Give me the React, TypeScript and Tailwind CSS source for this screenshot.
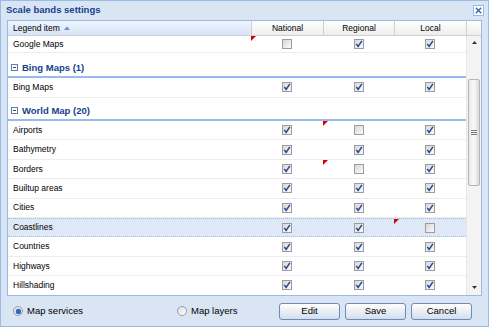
type Row = {
  name: string;
  v: [boolean, boolean, boolean];
  dirty?: number;
  selected?: boolean;
};

const WORLD: Row[] = [
  { name: "Airports", v: [true, false, true], dirty: 1 },
  { name: "Bathymetry", v: [true, true, true] },
  { name: "Borders", v: [true, false, true], dirty: 1 },
  { name: "Builtup areas", v: [true, true, true] },
  { name: "Cities", v: [true, true, true] },
  { name: "Coastlines", v: [true, true, false], dirty: 2, selected: true },
  { name: "Countries", v: [true, true, true] },
  { name: "Highways", v: [true, true, true] },
  { name: "Hillshading", v: [true, true, true] },
];

const COL_W = ["w-[72px]", "w-[71px]", "w-[72px]"];

function Checkbox({ on }: { on: boolean }) {
  return (
    <span className="flex h-[10px] w-[10px] items-center justify-center border border-[#9c9c9c] bg-linear-to-br from-[#d8d8d8] to-[#fbfbfb]">
      {on && (
        <svg width="8" height="8" viewBox="0 0 8 8">
          <path d="M1.3 3.9 L3.1 6.4 L6.9 0.9" fill="none" stroke="#2a4597" strokeWidth="1.5" />
        </svg>
      )}
    </span>
  );
}

function Dirty() {
  return (
    <svg className="absolute left-0 top-0" width="5" height="5" viewBox="0 0 5 5">
      <polygon points="0,0 5,0 0,5" fill="#d40000" />
    </svg>
  );
}

function GridRow({ row, h }: { row: Row; h: string }) {
  return (
    <div
      className={`flex ${h} items-center border-b ${
        row.selected
          ? "border-y border-dotted border-[#a3bae9] bg-[#dfe8f6]"
          : "border-[#ededed] bg-white"
      }`}
    >
      <div className="w-[244px] pl-[5px] text-[8.5px] text-black">{row.name}</div>
      {row.v.map((on, i) => (
        <div key={i} className={`relative flex h-full ${COL_W[i]} items-center justify-center`}>
          {row.dirty === i && <Dirty />}
          <Checkbox on={on} />
        </div>
      ))}
    </div>
  );
}

function GroupHeader({ label, h }: { label: string; h: string }) {
  return (
    <div className={`flex ${h} items-end border-b-2 border-[#99bbe8] bg-white pb-[2px] pl-[3px]`}>
      <svg width="7" height="7" viewBox="0 0 7 7" className="mb-[3px] mr-[4px]">
        <rect x="0.5" y="0.5" width="6" height="6" fill="#fff" stroke="#5f7fae" />
        <path d="M2 3.5 H5" stroke="#2b4a86" strokeWidth="1" />
      </svg>
      <span className="text-[9.5px] font-bold leading-[12px] text-[#15428b]">{label}</span>
    </div>
  );
}

function Radio({ on, label }: { on: boolean; label: string }) {
  return (
    <label className="flex items-center gap-[4px] text-[9.5px] text-black">
      <span className="flex h-[10px] w-[10px] items-center justify-center rounded-full border border-[#8a9fba] bg-linear-to-br from-[#dcdcdc] to-white">
        {on && <span className="h-[5px] w-[5px] rounded-full bg-[#2e6bc0] shadow-[0_0_1px_#0b3c8a]" />}
      </span>
      {label}
    </label>
  );
}

function Button({ children }: { children: string }) {
  return (
    <button className="flex h-[17px] w-[61px] items-center justify-center rounded-[3px] border border-[#6c8bb8] bg-linear-to-b from-white to-[#d4deec] text-[9.5px] text-black">
      {children}
    </button>
  );
}

export default function App() {
  return (
    <div className="flex h-[327px] w-[489px] flex-col border border-[#99bbe8] bg-[#dae5f4] font-['Liberation_Sans',Arial,sans-serif]">
      {/* title bar */}
      <div className="flex h-[19px] items-center justify-between pl-[5px] pr-[4px]">
        <span className="text-[9.5px] font-bold text-[#15428b]">Scale bands settings</span>
        <span className="flex h-[11px] w-[11px] items-center justify-center border border-[#99bbe8] bg-white">
          <svg width="7" height="7" viewBox="0 0 7 7">
            <path d="M0.8 0.8 L6.2 6.2 M6.2 0.8 L0.8 6.2" stroke="#3b63a8" strokeWidth="1.4" />
          </svg>
        </span>
      </div>

      {/* grid */}
      <div className="mx-[6px] flex h-[276px] flex-col border border-[#99bbe8] bg-white">
        <div className="flex h-[15px] border-b border-[#d0d0d0] bg-linear-to-b from-white to-[#ededed] text-[8.5px] text-black">
          <div className="flex w-[244px] items-center gap-[4px] border-r border-[#d0d0d0] bg-linear-to-b from-[#eef4fd] to-[#d6e4f7] pl-[5px]">
            Legend item
            <svg width="6" height="4" viewBox="0 0 6 4">
              <polygon points="0,4 3,0.5 6,4" fill="#6f8fc2" />
            </svg>
          </div>
          {["National", "Regional", "Local"].map((c, i) => (
            <div key={c} className={`flex ${COL_W[i]} items-center justify-center border-r border-[#d0d0d0]`}>
              {c}
            </div>
          ))}
          <div className="flex-1" />
        </div>

        <div className="flex min-h-0 flex-1">
          <div className="w-[459px] overflow-hidden">
            <GridRow row={{ name: "Google Maps", v: [false, true, true], dirty: 0 }} h="h-[17px]" />
            <GroupHeader label="Bing Maps (1)" h="h-[25px]" />
            <GridRow row={{ name: "Bing Maps", v: [true, true, true] }} h="h-[19.5px]" />
            <GroupHeader label="World Map (20)" h="h-[23.5px]" />
            {WORLD.map((r) => (
              <GridRow key={r.name} row={r} h="h-[19.4px]" />
            ))}
          </div>

          {/* scrollbar */}
          <div className="flex w-[15px] flex-col items-center border-l border-[#e6e6e6] bg-[#f3f3f3]">
            <svg width="5" height="3" viewBox="0 0 5 3" className="mt-[5px]">
              <polygon points="0,3 2.5,0 5,3" fill="#333" />
            </svg>
            <div className="mt-[35px] flex h-[107px] w-[12px] items-center justify-center rounded-[2px] border border-[#b5b5b5] bg-linear-to-r from-[#e9e9e9] via-[#fafafa] to-[#d9d9d9]">
              <svg width="6" height="6" viewBox="0 0 6 6">
                <path d="M0 0.5 H6 M0 2.5 H6 M0 4.5 H6" stroke="#7a7a7a" strokeWidth="1" />
              </svg>
            </div>
            <div className="flex-1" />
            <svg width="5" height="3" viewBox="0 0 5 3" className="mb-[6px]">
              <polygon points="0,0 2.5,3 5,0" fill="#333" />
            </svg>
          </div>
        </div>
      </div>

      {/* footer */}
      <div className="flex flex-1 items-center pl-[12px] pr-[16px]">
        <Radio on label="Map services" />
        <div className="ml-[94px]">
          <Radio on={false} label="Map layers" />
        </div>
        <div className="ml-auto flex gap-[5px]">
          <Button>Edit</Button>
          <Button>Save</Button>
          <Button>Cancel</Button>
        </div>
      </div>
    </div>
  );
}
